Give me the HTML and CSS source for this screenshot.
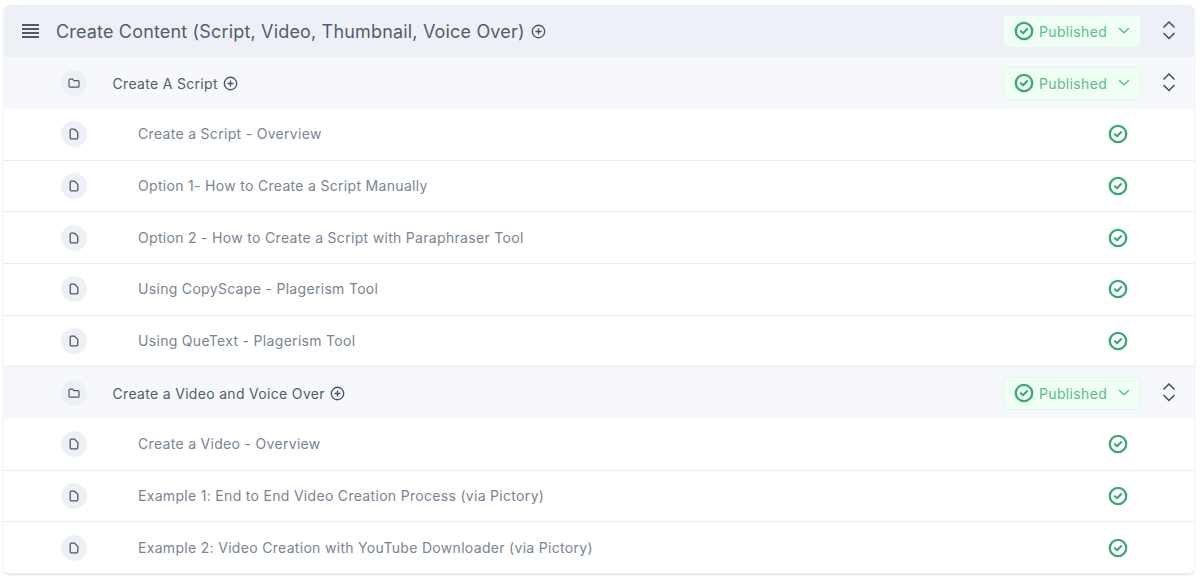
FILE: index.html
```html
<!DOCTYPE html>
<html lang="en">
<head>
<meta charset="utf-8">
<title>Course outline</title>
<link rel="stylesheet" href="styles.css">
</head>
<body>
<svg class="defs" width="0" height="0" aria-hidden="true">
  <defs>
    <symbol id="i-check" viewBox="0 0 20 20"><circle cx="10" cy="10" r="8.2" fill="none" stroke="currentColor" stroke-width="2.3"/><path d="M6.900 10.200l2.200 2.100 4.100-4.300" fill="none" stroke="currentColor" stroke-width="2.100" stroke-linecap="round" stroke-linejoin="round"/></symbol>
    <symbol id="i-plus" viewBox="0 0 16 16"><circle cx="8" cy="8" r="6.6" fill="none" stroke="currentColor" stroke-width="1.5"/><path d="M8 5.300v5.400M5.300 8h5.400" fill="none" stroke="currentColor" stroke-width="1.5" stroke-linecap="round"/></symbol>
    <symbol id="i-folder" viewBox="0 0 14 14"><path d="M2 4.200c0-.6.4-1 1-1h2.600l1.300 1.400H11c.6 0 1 .4 1 1v4.600c0 .6-.4 1-1 1H3c-.6 0-1-.4-1-1z" fill="none" stroke="currentColor" stroke-width="1.200" stroke-linejoin="round"/></symbol>
    <symbol id="i-file" viewBox="0 0 14 14"><path d="M3.200 3.200c0-.6.4-1 1-1h3.400l3.200 3.200v5.400c0 .6-.4 1-1 1H4.200c-.6 0-1-.4-1-1z" fill="none" stroke="currentColor" stroke-width="1.300" stroke-linejoin="round"/></symbol>
    <symbol id="i-sort" viewBox="0 0 14 24"><path d="M2 8l5-5 5 5M2 14.500l5 5 5-5" fill="none" stroke="currentColor" stroke-width="1.700" stroke-linecap="round" stroke-linejoin="round"/></symbol>
    <symbol id="i-down" viewBox="0 0 12 12"><path d="M1.500 3.500L6 7.700l4.500-4.200" fill="none" stroke="currentColor" stroke-width="1.400" stroke-linecap="round" stroke-linejoin="round"/></symbol>
  </defs>
</svg>
<main class="outline">
  <header class="row row-main">
    <div class="menu"><span></span><span></span><span></span><span></span></div>
    <h1 class="main-title">Create Content (Script, Video, Thumbnail, Voice Over)</h1>
    <svg class="plus plus-main"><use href="#i-plus"/></svg>
    <div class="status status-main"><svg class="check"><use href="#i-check"/></svg><span>Published</span><svg class="down"><use href="#i-down"/></svg></div>
    <svg class="sort"><use href="#i-sort"/></svg>
  </header>

  <section>
    <div class="row row-sub">
      <span class="bubble"><svg class="glyph"><use href="#i-folder"/></svg></span>
      <h2 class="sub-title">Create A Script</h2>
      <svg class="plus"><use href="#i-plus"/></svg>
      <div class="status"><svg class="check"><use href="#i-check"/></svg><span>Published</span><svg class="down"><use href="#i-down"/></svg></div>
      <svg class="sort"><use href="#i-sort"/></svg>
    </div>
    <div class="row row-item"><span class="bubble"><svg class="glyph"><use href="#i-file"/></svg></span><span class="item-title">Create a Script - Overview</span><svg class="check check-item"><use href="#i-check"/></svg></div>
    <div class="row row-item"><span class="bubble"><svg class="glyph"><use href="#i-file"/></svg></span><span class="item-title">Option 1- How to Create a Script Manually</span><svg class="check check-item"><use href="#i-check"/></svg></div>
    <div class="row row-item"><span class="bubble"><svg class="glyph"><use href="#i-file"/></svg></span><span class="item-title">Option 2 - How to Create a Script with Paraphraser Tool</span><svg class="check check-item"><use href="#i-check"/></svg></div>
    <div class="row row-item"><span class="bubble"><svg class="glyph"><use href="#i-file"/></svg></span><span class="item-title">Using CopyScape - Plagerism Tool</span><svg class="check check-item"><use href="#i-check"/></svg></div>
    <div class="row row-item"><span class="bubble"><svg class="glyph"><use href="#i-file"/></svg></span><span class="item-title">Using QueText - Plagerism Tool</span><svg class="check check-item"><use href="#i-check"/></svg></div>
  </section>

  <section>
    <div class="row row-sub">
      <span class="bubble"><svg class="glyph"><use href="#i-folder"/></svg></span>
      <h2 class="sub-title">Create a Video and Voice Over</h2>
      <svg class="plus"><use href="#i-plus"/></svg>
      <div class="status"><svg class="check"><use href="#i-check"/></svg><span>Published</span><svg class="down"><use href="#i-down"/></svg></div>
      <svg class="sort"><use href="#i-sort"/></svg>
    </div>
    <div class="row row-item"><span class="bubble"><svg class="glyph"><use href="#i-file"/></svg></span><span class="item-title">Create a Video - Overview</span><svg class="check check-item"><use href="#i-check"/></svg></div>
    <div class="row row-item"><span class="bubble"><svg class="glyph"><use href="#i-file"/></svg></span><span class="item-title">Example 1: End to End Video Creation Process (via Pictory)</span><svg class="check check-item"><use href="#i-check"/></svg></div>
    <div class="row row-item"><span class="bubble"><svg class="glyph"><use href="#i-file"/></svg></span><span class="item-title">Example 2: Video Creation with YouTube Downloader (via Pictory)</span><svg class="check check-item"><use href="#i-check"/></svg></div>
  </section>
</main>
</body>
</html>
```
FILE: styles.css
```css
* { box-sizing: border-box; }
html, body { height: 100%; }
body {
  margin: 0;
  padding: 5px 6px 0 4px;
  background: #fff;
  font-family: Inter, "Liberation Sans", sans-serif;
  overflow: hidden;
}
.defs { display: block; height: 0; }
.outline {
  border-radius: 6px;
  background: #fff;
  box-shadow: 0 1px 3px rgba(100, 116, 139, .2);
}
.row {
  display: flex;
  align-items: center;
  height: 51.7px;
}
.row-main {
  height: 52.3px;
  padding-left: 18px;
  background: #edf1f7;
  border-radius: 6px 6px 0 0;
}
.menu { display: flex; flex-direction: column; gap: 1.8px; width: 17px; margin-right: 17px; }
.menu span { display: block; height: 2px; background: #4f5967; }
.main-title { margin: 0; font-size: 18px; font-weight: 400; letter-spacing: .17px; color: #545d6b; white-space: nowrap; }
.plus { width: 15px; height: 15px; margin-left: 5.500px; color: #4a5568; flex: none; }
.plus-main { margin-left: 6px; }
.row-sub { padding-left: 57px; background: #f6f8fb; }
.bubble {
  display: flex;
  align-items: center;
  justify-content: center;
  width: 26px;
  height: 26px;
  border-radius: 50%;
  background: #edf1f6;
  flex: none;
}
.glyph { width: 14px; height: 14px; color: #4f5967; }
.sub-title { margin: 0 0 0 25.500px; font-size: 14px; font-weight: 400; letter-spacing: .32px; color: #545d6b; white-space: nowrap; }
.row-item { padding-left: 57px; border-bottom: 1px solid #e8ecf1; }
.item-title { margin-left: 51px; padding-bottom: 1px; font-size: 14px; letter-spacing: .31px; color: #7a8494; white-space: nowrap; }
.status {
  display: flex;
  align-items: center;
  width: 138px;
  height: 33px;
  margin-left: auto;
  padding-left: 10px;
  border: 1px solid #e6f4ec;
  border-radius: 5px;
  background: #f0fff4;
  color: #5cbb8c;
  font-size: 14px;
  letter-spacing: .35px;
}
.status-main { border-color: transparent; background-clip: padding-box; }
.status span { margin-left: 5px; }
.check { width: 20px; height: 20px; color: #3aa875; flex: none; }
.down { width: 12px; height: 12px; margin-left: 11px; color: #5cbb8c; }
.sort { width: 14px; height: 24px; margin: 0 18px 0 21px; color: #4a5568; flex: none; }
.check-item { margin-left: auto; margin-right: 66px; }
```
